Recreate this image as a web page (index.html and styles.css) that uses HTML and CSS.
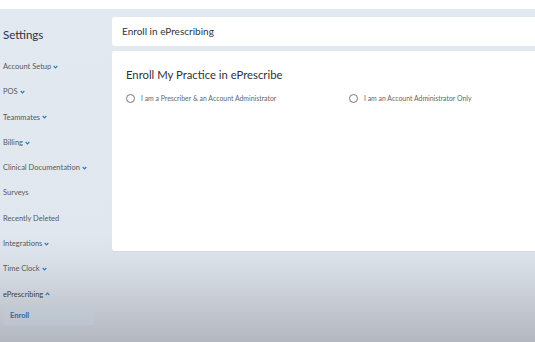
FILE: index.html
```html
<!DOCTYPE html>
<html lang="en">
<head>
    <meta charset="UTF-8">
    <meta name="viewport" content="width=device-width, initial-scale=1.0">
    <title>Enroll in ePrescribing</title>
    <link rel="stylesheet" href="styles.css">
</head>
<body>
    <div class="topbar"></div>

    <div class="page">
        <aside class="sidebar">
            <h2 class="sidebar-title">Settings</h2>
            <ul class="menu">
                <li class="menu-item">Account Setup <svg class="chev" viewBox="0 0 6 4"><polyline points="0.8,0.8 3,3 5.2,0.8"/></svg></li>
                <li class="menu-item">POS <svg class="chev" viewBox="0 0 6 4"><polyline points="0.8,0.8 3,3 5.2,0.8"/></svg></li>
                <li class="menu-item">Teammates <svg class="chev" viewBox="0 0 6 4"><polyline points="0.8,0.8 3,3 5.2,0.8"/></svg></li>
                <li class="menu-item">Billing <svg class="chev" viewBox="0 0 6 4"><polyline points="0.8,0.8 3,3 5.2,0.8"/></svg></li>
                <li class="menu-item">Clinical Documentation <svg class="chev" viewBox="0 0 6 4"><polyline points="0.8,0.8 3,3 5.2,0.8"/></svg></li>
                <li class="menu-item">Surveys</li>
                <li class="menu-item">Recently Deleted</li>
                <li class="menu-item">Integrations <svg class="chev" viewBox="0 0 6 4"><polyline points="0.8,0.8 3,3 5.2,0.8"/></svg></li>
                <li class="menu-item">Time Clock <svg class="chev" viewBox="0 0 6 4"><polyline points="0.8,0.8 3,3 5.2,0.8"/></svg></li>
                <li class="menu-item open">ePrescribing <svg class="chev" viewBox="0 0 6 4"><polyline points="0.8,3.2 3,1 5.2,3.2"/></svg></li>
            </ul>
            <div class="submenu-item active">Enroll</div>
        </aside>

        <main class="content">
            <div class="card header-card">Enroll in ePrescribing</div>

            <div class="card main-card">
                <h1 class="card-title">Enroll My Practice in ePrescribe</h1>
                <div class="options">
                    <label class="option"><span class="radio"></span>I am a Prescriber &amp; an Account Administrator</label>
                    <label class="option"><span class="radio"></span>I am an Account Administrator Only</label>
                </div>
            </div>
        </main>
    </div>
</body>
</html>
```

FILE: styles.css
```css
* {
    margin: 0;
    padding: 0;
    box-sizing: border-box;
    font-family: 'Lato', 'Open Sans', sans-serif;
}

body {
    height: 100vh;
    overflow: hidden;
    color: #333;
    background: linear-gradient(to bottom, #e3e9f0 0, #e1e7ee 235px, #d6dce3 270px, #b3b8c0 100%);
}

.topbar {
    height: 9px;
    background-color: #fff;
}

.page {
    display: flex;
}

.sidebar {
    width: 112px;
    flex-shrink: 0;
    padding-top: 16px;
}

.sidebar-title {
    font-size: 11.5px;
    font-weight: 400;
    line-height: 20px;
    color: #2f3338;
    padding-left: 3px;
}

.menu {
    list-style: none;
    margin-top: 9px;
}

.menu-item {
    font-size: 7.5px;
    line-height: 25.3px;
    height: 25.3px;
    color: #555a61;
    padding-left: 3px;
    display: flex;
    align-items: center;
    gap: 2px;
}

.menu-item.open {
    color: #3a3f45;
}

.chev {
    width: 5px;
    height: 4px;
    fill: none;
    stroke: #2a7cc0;
    stroke-width: 1.4;
}

.submenu-item {
    margin-left: 4px;
    width: 90px;
    height: 18px;
    line-height: 18px;
    padding-left: 6px;
    font-size: 7.5px;
    font-weight: 700;
    color: #2e6aa3;
    background-color: rgba(190, 202, 214, 0.45);
    border-radius: 2px;
}

.content {
    flex: 1;
    min-width: 0;
    padding-top: 8px;
}

.card {
    background-color: #fff;
    border-radius: 3px 0 0 3px;
}

.header-card {
    height: 29px;
    line-height: 29px;
    padding-left: 10px;
    font-size: 10px;
    color: #30343a;
    margin-bottom: 5px;
}

.main-card {
    height: 200px;
    padding: 16px 14px 0;
    box-shadow: 0 1px 1px rgba(0, 0, 0, 0.04);
}

.card-title {
    font-size: 11.3px;
    font-weight: 400;
    line-height: 16px;
    color: #2f3338;
}

.options {
    display: flex;
    margin-top: 11px;
}

.option {
    width: 223px;
    flex-shrink: 0;
    display: flex;
    align-items: center;
    gap: 6px;
    font-size: 6.9px;
    line-height: 9px;
    color: #62676d;
}

.option:last-child {
    width: auto;
}

.radio {
    width: 9px;
    height: 9px;
    border: 1px solid #777;
    border-radius: 50%;
}
```
